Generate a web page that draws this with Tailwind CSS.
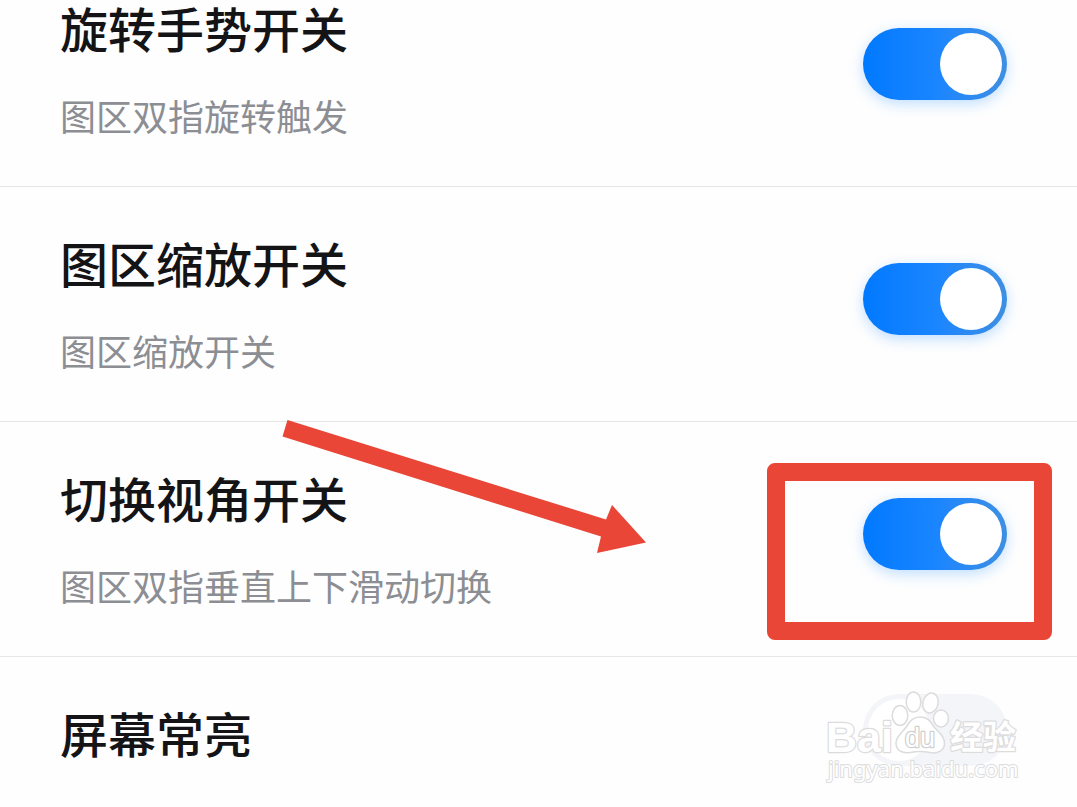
<!DOCTYPE html>
<html lang="zh-CN">
<head>
<meta charset="utf-8">
<meta name="viewport" content="width=device-width, initial-scale=1">
<title>设置</title>
<script src="https://cdn.jsdelivr.net/npm/@tailwindcss/browser@4"></script>
</head>
<body class="bg-[#fefefe] overflow-hidden font-['Noto_Sans_CJK_SC',sans-serif] text-[#141416]">
<!-- The list is scrolled part of the way through its first row -->
<main class="relative -mt-12">
  <ul>
    <li class="flex items-center justify-between border-b border-[#e6e6e6] pt-[34px] pb-11 pl-15 pr-[70px]">
      <label for="rotate" class="flex flex-col gap-[37px] pt-3.5 pb-[3px]">
        <span class="text-5xl/[54px] font-medium">旋转手势开关</span>
        <span class="text-4xl/[48px] text-[#8c8e93]">图区双指旋转触发</span>
      </label>
      <input id="rotate" type="checkbox" role="switch" checked class="relative h-[72px] w-36 shrink-0 appearance-none rounded-full bg-[#eff0f6] before:absolute before:top-[5px] before:left-[5px] before:size-[62px] before:rounded-full before:bg-white checked:bg-linear-to-r checked:from-[#0079ff] checked:via-[#1985ff] checked:to-[#3d8fe2] checked:shadow-[0_4px_14px_#2f95ff4d] checked:before:left-[77px]">
    </li>
    <li class="flex items-center justify-between border-b border-[#e6e6e6] pt-[34px] pb-11 pl-15 pr-[70px]">
      <label for="zoom" class="flex flex-col gap-[37px] pt-3.5 pb-[3px]">
        <span class="text-5xl/[54px] font-medium">图区缩放开关</span>
        <span class="text-4xl/[48px] text-[#8c8e93]">图区缩放开关</span>
      </label>
      <input id="zoom" type="checkbox" role="switch" checked class="relative h-[72px] w-36 shrink-0 appearance-none rounded-full bg-[#eff0f6] before:absolute before:top-[5px] before:left-[5px] before:size-[62px] before:rounded-full before:bg-white checked:bg-linear-to-r checked:from-[#0079ff] checked:via-[#1985ff] checked:to-[#3d8fe2] checked:shadow-[0_4px_14px_#2f95ff4d] checked:before:left-[77px]">
    </li>
    <li class="relative flex items-center justify-between border-b border-[#e6e6e6] pt-[34px] pb-11 pl-15 pr-[70px]">
      <label for="angle" class="flex flex-col gap-[37px] pt-3.5 pb-[3px]">
        <span class="text-5xl/[54px] font-medium">切换视角开关</span>
        <span class="text-4xl/[48px] text-[#8c8e93]">图区双指垂直上下滑动切换</span>
      </label>
      <input id="angle" type="checkbox" role="switch" checked class="relative h-[72px] w-36 shrink-0 appearance-none rounded-full bg-[#eff0f6] before:absolute before:top-[5px] before:left-[5px] before:size-[62px] before:rounded-full before:bg-white checked:bg-linear-to-r checked:from-[#0079ff] checked:via-[#1985ff] checked:to-[#3d8fe2] checked:shadow-[0_4px_14px_#2f95ff4d] checked:before:left-[77px]">
      <!-- Highlight frame and arrow drawn over the row -->
      <div class="pointer-events-none absolute top-[41px] right-[25px] h-[177px] w-[285px] rounded-lg border-[18px] border-[#e94637]"></div>
      <svg class="pointer-events-none absolute -top-[2px] left-[282px]" width="366" height="136" viewBox="282 420 366 136" aria-hidden="true">
        <path d="M287.500 420L606 519.500L612 505L646 542.500L597 553L601 536.500L282.500 436.500Z" fill="#e94637"/>
      </svg>
    </li>
    <li class="flex items-center justify-between pt-[34px] pb-11 pl-15 pr-[70px]">
      <label for="awake" class="flex flex-col pt-3.5 pb-2.5">
        <span class="text-5xl/[54px] font-medium">屏幕常亮</span>
      </label>
      <input id="awake" type="checkbox" role="switch" class="relative h-[72px] w-36 shrink-0 appearance-none rounded-full bg-[#f4f5f9] before:absolute before:top-[5px] before:left-[5px] before:size-[62px] before:rounded-full before:bg-white">
    </li>
  </ul>
  <!-- Watermark -->
  <svg class="pointer-events-none absolute top-[733px] right-[52px]" width="205" height="104" viewBox="820 685 205 104" role="img" aria-label="Baidu 经验">
    <g fill="#ffffff" stroke="#dcdcdd" stroke-width="1.500" stroke-linejoin="round">
      <ellipse cx="900" cy="715.500" rx="7.800" ry="10"/>
      <ellipse cx="913.500" cy="702" rx="7.300" ry="10"/>
      <ellipse cx="930.500" cy="703" rx="7.600" ry="10" transform="rotate(14 930.500 703)"/>
      <ellipse cx="941" cy="718.500" rx="7.500" ry="8.500"/>
      <path d="M920 717C928 717 931 722 934 727C938 732 945 736 944.500 744C944 751 937 754 930 752.500C923 751 917 751 910 752.500C902 754 896 750 896 743C896 736 903 732 907 726C910 721 913 717 920 717Z"/>
      <g paint-order="stroke" stroke-width="2.500">
        <text x="826" y="752" font-family="Liberation Sans, sans-serif" font-weight="700" font-size="43">Bai</text>
        <text x="905" y="747" font-family="Liberation Sans, sans-serif" font-size="27" stroke="#cfcfd1">du</text>
        <text x="950" y="749" font-family="Noto Sans CJK SC, sans-serif" font-weight="700" font-size="33">经验</text>
        <text x="828" y="777" font-family="Noto Sans, sans-serif" font-size="22" stroke-width="2">jingyan.baidu.com</text>
      </g>
    </g>
  </svg>
</main>
</body>
</html>
